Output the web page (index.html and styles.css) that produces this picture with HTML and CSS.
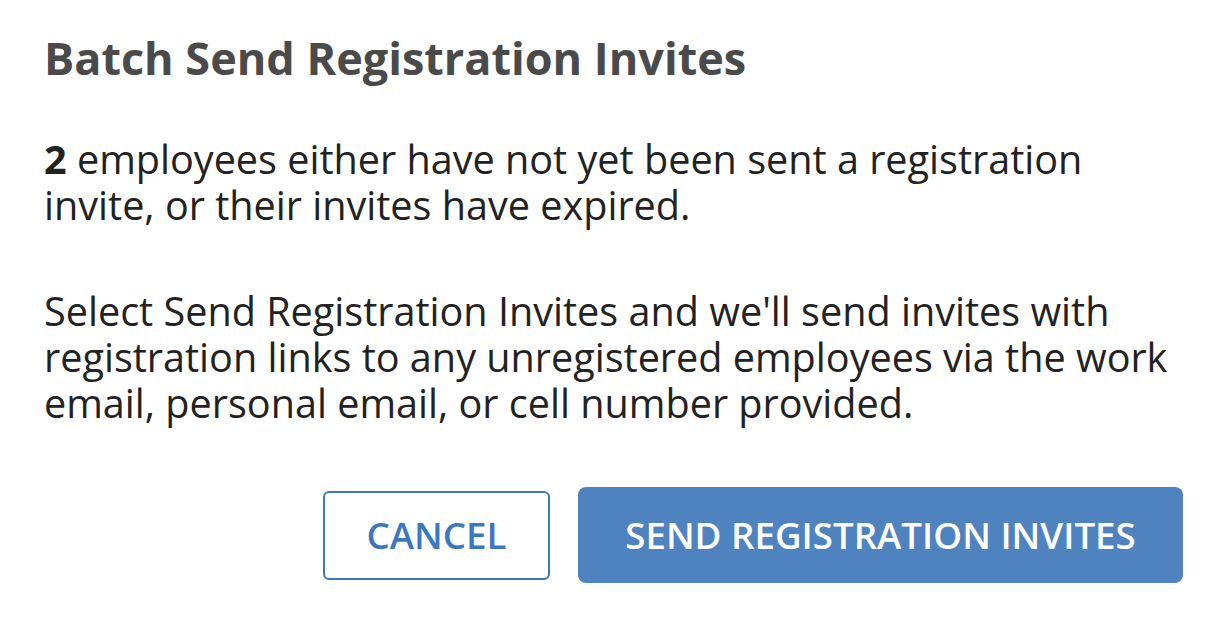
FILE: index.html
```html
<!DOCTYPE html>
<html lang="en">
<head>
<meta charset="utf-8">
<title>Batch Send Registration Invites</title>
<link rel="stylesheet" href="styles.css">
</head>
<body>
<div class="dialog">
  <h1 class="title">Batch Send Registration Invites</h1>
  <p class="text"><strong>2</strong> employees either have not yet been sent a registration invite, or their invites have expired.</p>
  <p class="text">Select Send Registration Invites and we'll send invites with registration links to any unregistered employees via the work email, personal email, or cell number provided.</p>
  <div class="actions">
    <button class="btn btn-cancel">CANCEL</button>
    <button class="btn btn-send">SEND REGISTRATION INVITES</button>
  </div>
</div>
</body>
</html>
```

FILE: styles.css
```css
html, body {
  margin: 0;
  padding: 0;
  background: #ffffff;
}
body {
  font-family: "Open Sans", "Liberation Sans", sans-serif;
}
.dialog {
  width: 1220px;
  height: 638px;
  box-sizing: border-box;
  padding: 28px 37px 0 44px;
}
.title {
  margin: 0;
  font-size: 45px;
  line-height: 60px;
  font-weight: 700;
  color: #4a4a4a;
}
.text {
  margin: 0;
  font-size: 39.6px;
  line-height: 46px;
  color: #222222;
}
.title + .text {
  margin-top: 48px;
}
.text + .text {
  margin-top: 60px;
}
.text strong {
  font-weight: 700;
}
.actions {
  display: flex;
  justify-content: flex-end;
  align-items: center;
  gap: 28px;
  margin-top: 61px;
}
.btn {
  font-family: "Open Sans", "Liberation Sans", sans-serif;
  font-size: 36.7px;
  font-weight: 600;
  box-sizing: border-box;
  cursor: pointer;
  padding: 0;
}
.btn-cancel {
  width: 227px;
  height: 89px;
  background: #ffffff;
  color: #3c78bf;
  border: 2px solid #3c78bf;
  border-radius: 6px;
}
.btn-send {
  width: 605px;
  height: 96px;
  background: #4f83bf;
  color: #ffffff;
  border: none;
  border-radius: 8px;
}
```
